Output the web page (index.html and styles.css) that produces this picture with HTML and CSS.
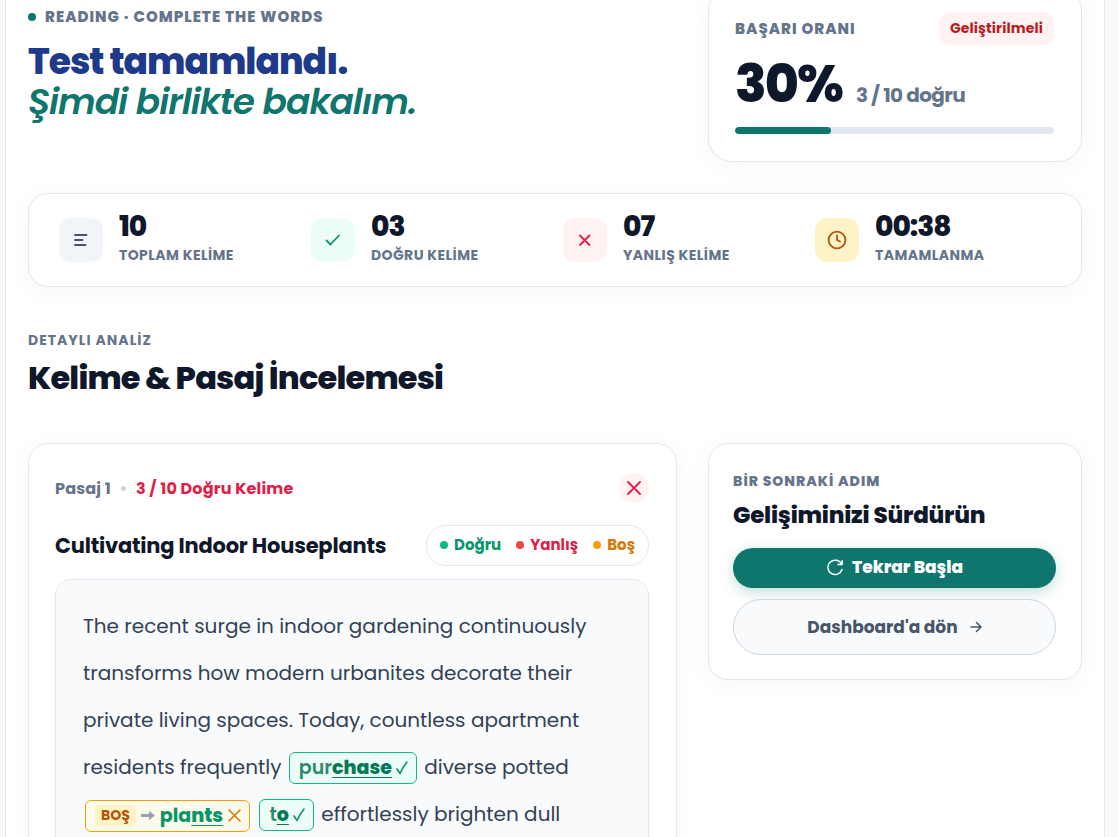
FILE: index.html
```html
<!DOCTYPE html>
<html lang="tr">
<head>
    <meta charset="UTF-8">
    <meta name="viewport" content="width=device-width, initial-scale=1.0">
    <title>Test tamamlandı</title>
    <link rel="stylesheet" href="styles.css">
</head>
<body>
    <main class="shell">
        <header class="hero">
            <div class="hero-text">
                <p class="eyebrow hero-eyebrow"><span class="dot dot-teal"></span>READING · COMPLETE THE WORDS</p>
                <h1>Test tamamlandı.<em>Şimdi birlikte bakalım.</em></h1>
            </div>
            <section class="card score">
                <div class="score-head">
                    <span class="score-label">BAŞARI ORANI</span>
                    <span class="score-badge">Geliştirilmeli</span>
                </div>
                <div class="score-main">
                    <span class="score-value">30%</span>
                    <span class="score-detail">3 / 10 doğru</span>
                </div>
                <div class="bar"><div class="bar-fill" style="width: 30%"></div></div>
            </section>
        </header>

        <section class="card stats">
            <div class="stat">
                <span class="stat-icon icon-slate">
                    <svg width="20" height="20" viewBox="0 0 20 20"><path d="M4 5h11.500M4 10h7.500M4 15h10.500" /></svg>
                </span>
                <div>
                    <div class="stat-value">10</div>
                    <div class="stat-label">TOPLAM KELİME</div>
                </div>
            </div>
            <div class="stat">
                <span class="stat-icon icon-green">
                    <svg width="20" height="20" viewBox="0 0 20 20"><path d="M3.500 10.500l4 4 8.500-9" /></svg>
                </span>
                <div>
                    <div class="stat-value">03</div>
                    <div class="stat-label">DOĞRU KELİME</div>
                </div>
            </div>
            <div class="stat">
                <span class="stat-icon icon-red">
                    <svg width="20" height="20" viewBox="0 0 20 20"><path d="M5 5.500l9.500 9.500M14.500 5.500L5 15" /></svg>
                </span>
                <div>
                    <div class="stat-value">07</div>
                    <div class="stat-label">YANLIŞ KELİME</div>
                </div>
            </div>
            <div class="stat">
                <span class="stat-icon icon-amber">
                    <svg width="20" height="20" viewBox="0 0 20 20"><circle cx="10" cy="10" r="8.400" /><path d="M10 5.500V10l3 1.500" /></svg>
                </span>
                <div>
                    <div class="stat-value">00:38</div>
                    <div class="stat-label">TAMAMLANMA</div>
                </div>
            </div>
        </section>

        <div class="section-head">
            <p class="eyebrow">DETAYLI ANALİZ</p>
            <h2>Kelime &amp; Pasaj İncelemesi</h2>
        </div>

        <div class="columns">
            <article class="card passage">
                <div class="passage-meta">
                    <span>Pasaj 1</span>
                    <span class="meta-dot"></span>
                    <span class="meta-result">3 / 10 Doğru Kelime</span>
                    <span class="meta-status">
                        <svg width="14" height="14" viewBox="0 0 14 14"><path d="M1 1l12 12M13 1L1 13" /></svg>
                    </span>
                </div>
                <div class="passage-head">
                    <h3>Cultivating Indoor Houseplants</h3>
                    <div class="legend">
                        <span class="legend-green"><i class="dot dot-green"></i>Doğru</span>
                        <span class="legend-red"><i class="dot dot-red"></i>Yanlış</span>
                        <span class="legend-amber"><i class="dot dot-amber"></i>Boş</span>
                    </div>
                </div>
                <p class="passage-text">
                    The recent surge in indoor gardening continuously transforms how modern urbanites decorate their private living spaces. Today, countless apartment residents frequently
                    <span class="chip chip-ok"><span class="word">pur<b>chase</b></span><svg width="12" height="14" viewBox="0 0 12 14"><path class="tick" d="M1 8l3 4.500C6 8 8.500 4 11 1" /></svg></span>
                    diverse potted
                    <span class="chip chip-empty"><span class="tag">BOŞ</span><svg width="14" height="12" viewBox="0 0 14 12"><path class="arrow" d="M0 4h8V1l6 4.500L8 10V7H0z" /></svg><span class="word">pla<b>nts</b></span><svg width="13" height="13" viewBox="0 0 13 13"><path class="cross" d="M1 1l11 11M12 1L1 12" /></svg></span>
                    <span class="chip chip-ok"><span class="word">t<b>o</b></span><svg width="12" height="14" viewBox="0 0 12 14"><path class="tick" d="M1 8l3 4.500C6 8 8.500 4 11 1" /></svg></span>
                    effortlessly brighten dull
                </p>
            </article>

            <aside class="card next">
                <p class="eyebrow eyebrow-strong">BİR SONRAKİ ADIM</p>
                <h3>Gelişiminizi Sürdürün</h3>
                <button type="button" class="btn btn-primary">
                    <svg width="18" height="18" viewBox="0 0 18 18"><path d="M16 11.500A7.200 7.200 0 1 1 15.500 6M16.200 2.500V6.500H12" /></svg>
                    Tekrar Başla
                </button>
                <a href="#" class="btn btn-secondary">
                    Dashboard'a dön
                    <svg width="12" height="12" viewBox="0 0 12 12"><path d="M1 6h10M6.500 1.500L11 6l-4.500 4.500" /></svg>
                </a>
            </aside>
        </div>
    </main>
</body>
</html>
```
FILE: styles.css
```css
* {
    box-sizing: border-box;
}

body {
    margin: 0;
    height: 100vh;
    overflow: hidden;
    background: #fafafa;
    color: #0f172a;
    font-family: 'Poppins', 'Inter', sans-serif;
}

h1, h2, h3, p {
    margin: 0;
}

svg {
    flex: none;
    fill: none;
    stroke: currentColor;
    stroke-width: 1.8;
    stroke-linecap: round;
    stroke-linejoin: round;
}

.shell {
    margin: -13px 13px 0 5px;
    padding: 0 22px 40px;
    min-height: calc(100vh + 13px);
    background: #fff;
    border: 1px solid #e2e8f0;
    border-width: 0 1px;
}

.card {
    background: #fff;
    border: 1px solid #e2e8f0;
    border-radius: 20px;
    box-shadow: 0 4px 24px rgba(15, 23, 42, 0.04);
}

.eyebrow {
    font-size: 14px;
    line-height: 20px;
    font-weight: 700;
    letter-spacing: 1px;
    color: #64748b;
}

.eyebrow-strong {
    font-weight: 800;
}

.dot {
    flex: none;
    width: 8px;
    height: 8px;
    border-radius: 50%;
}

.dot-teal { background: #0f766e; }
.dot-green { background: #10b981; }
.dot-red { background: #ef4444; }
.dot-amber { background: #f59e0b; }

/* Hero */
.hero, .columns {
    display: grid;
    grid-template-columns: minmax(0, 1fr) 374px;
    gap: 31px;
    align-items: start;
}

.hero-text {
    padding-top: 20px;
}

.hero-eyebrow {
    display: flex;
    align-items: center;
    gap: 9px;
    font-size: 15px;
    font-weight: 800;
}

h1 {
    margin-top: 15px;
    font-size: 36px;
    line-height: 40px;
    font-weight: 800;
    letter-spacing: -1px;
    color: #1e3a8a;
}

h1 em {
    display: block;
    font-weight: 600;
    color: #0f766e;
}

.score {
    padding: 24px 27px 27px 26px;
    border-radius: 24px;
}

.score-head {
    display: flex;
    justify-content: space-between;
    align-items: center;
}

.score-label {
    font-size: 15px;
    font-weight: 800;
    letter-spacing: 1px;
    color: #64748b;
}

.score-badge {
    padding: 0 11px;
    border-radius: 12px;
    background: #fef2f2;
    color: #b91c1c;
    font-size: 14px;
    line-height: 33px;
    font-weight: 700;
    letter-spacing: 0.01em;
}

.score-main {
    display: flex;
    align-items: baseline;
    gap: 14px;
    margin: 11px 0 15px;
}

.score-value {
    font-size: 52px;
    line-height: 56px;
    font-weight: 800;
    letter-spacing: -2px;
}

.score-detail {
    font-size: 20px;
    font-weight: 700;
    letter-spacing: -0.03em;
    color: #64748b;
}

.bar {
    height: 7px;
    border-radius: 4px;
    background: #e2e8f0;
    overflow: hidden;
}

.bar-fill {
    height: 100%;
    border-radius: 4px;
    background: #0f766e;
}

/* Stats */
.stats {
    display: grid;
    grid-template-columns: repeat(4, 1fr);
    gap: 16px;
    margin-top: 31px;
    padding: 18px 30px;
}

.stat {
    display: flex;
    align-items: center;
    gap: 16px;
}

.stat-icon {
    display: flex;
    align-items: center;
    justify-content: center;
    width: 44px;
    height: 44px;
    border-radius: 12px;
}

.icon-slate { background: #f1f5f9; color: #475569; }
.icon-green { background: #ecfdf5; color: #059669; }
.icon-red { background: #fef2f2; color: #e11d48; }
.icon-amber { background: #fef3c7; color: #b45309; }

.stat-value {
    font-size: 28px;
    line-height: 30px;
    font-weight: 800;
    letter-spacing: -1px;
}

.stat-label {
    font-size: 14px;
    line-height: 26px;
    font-weight: 700;
    letter-spacing: 0.03em;
    color: #64748b;
}

/* Section heading */
.section-head {
    padding: 43px 0 45px;
}

h2 {
    margin-top: 8px;
    font-size: 32px;
    line-height: 40px;
    font-weight: 800;
    letter-spacing: -0.025em;
}

h3 {
    font-size: 21px;
    line-height: 28px;
    font-weight: 700;
    letter-spacing: -0.01em;
}

/* Passage */
.passage {
    padding: 29px 27px 27px 26px;
}

.passage-meta {
    display: flex;
    align-items: center;
    gap: 10px;
    font-size: 16px;
    font-weight: 700;
    letter-spacing: 0.01em;
    color: #64748b;
}

.meta-dot {
    width: 5px;
    height: 5px;
    border-radius: 50%;
    background: #cbd5e1;
}

.meta-result {
    color: #e11d48;
}

.meta-status {
    display: flex;
    align-items: center;
    justify-content: center;
    width: 30px;
    height: 30px;
    margin-left: auto;
    border-radius: 50%;
    background: #fef2f2;
    color: #e11d48;
}

.passage-head {
    display: flex;
    align-items: center;
    justify-content: space-between;
    margin: 22px 0 13px;
}

.legend {
    display: flex;
    gap: 15px;
    padding: 0 13px 2px;
    border: 1px solid #e2e8f0;
    border-radius: 20px;
    font-size: 15px;
    line-height: 37px;
    font-weight: 700;
}

.legend span {
    display: flex;
    align-items: center;
    gap: 6px;
}

.legend-green { color: #059669; }
.legend-red { color: #e11d48; }
.legend-amber { color: #d97706; }

.passage-text {
    padding: 23px 26px 48px 27px;
    border: 1px solid #e2e8f0;
    border-radius: 16px;
    background: #f8fafc;
    color: #334155;
    font-size: 20px;
    line-height: 47px;
}

.chip {
    display: inline-flex;
    align-items: center;
    gap: 4px;
    height: 32px;
    margin: 0 2px;
    padding: 0 8px 0 9px;
    border: 1px solid;
    border-radius: 6px;
    font-size: 19px;
    line-height: 30px;
    font-weight: 600;
}

.chip b {
    font-weight: 800;
    text-decoration: underline;
    text-decoration-thickness: 1px;
    text-underline-offset: 3px;
}

.chip-ok {
    border-color: #10b981;
    background: #ecfdf5;
    color: #308b6e;
}

.chip-ok b {
    color: #047857;
}

.chip-empty {
    gap: 5px;
    border-color: #f59e0b;
    background: #fffbeb;
    color: #059669;
    font-weight: 700;
    vertical-align: middle;
}

.chip-empty .tag {
    padding: 0 6px;
    border-radius: 5px;
    background: #fef3c7;
    color: #b45309;
    font-size: 14px;
    line-height: 21px;
}

.tick {
    stroke: #059669;
    stroke-width: 1.6;
}

.arrow {
    fill: #94a3b8;
    stroke: none;
}

.cross {
    stroke: #d97706;
    stroke-width: 1.6;
}

/* Next step */
.next {
    display: flex;
    flex-direction: column;
    padding: 27px 25px 24px 24px;
}

.next h3 {
    margin: 10px 0 19px;
    font-size: 23px;
    font-weight: 800;
}

.btn {
    display: flex;
    align-items: center;
    justify-content: center;
    gap: 8px;
    border-radius: 28px;
    font-family: inherit;
    font-size: 17px;
    line-height: 24px;
}

.btn svg {
    stroke-width: 1.5;
}

.btn-primary {
    padding: 7px 8px 9px;
    border: none;
    background: #0f766e;
    color: #fff;
    font-weight: 800;
    box-shadow: 0 4px 14px rgba(15, 118, 110, 0.25);
}

.btn-secondary {
    gap: 12px;
    margin-top: 11px;
    padding: 15px;
    border: 1px solid #cbd5e1;
    background: #f8fafc;
    color: #475569;
    font-weight: 700;
    text-decoration: none;
}
```
